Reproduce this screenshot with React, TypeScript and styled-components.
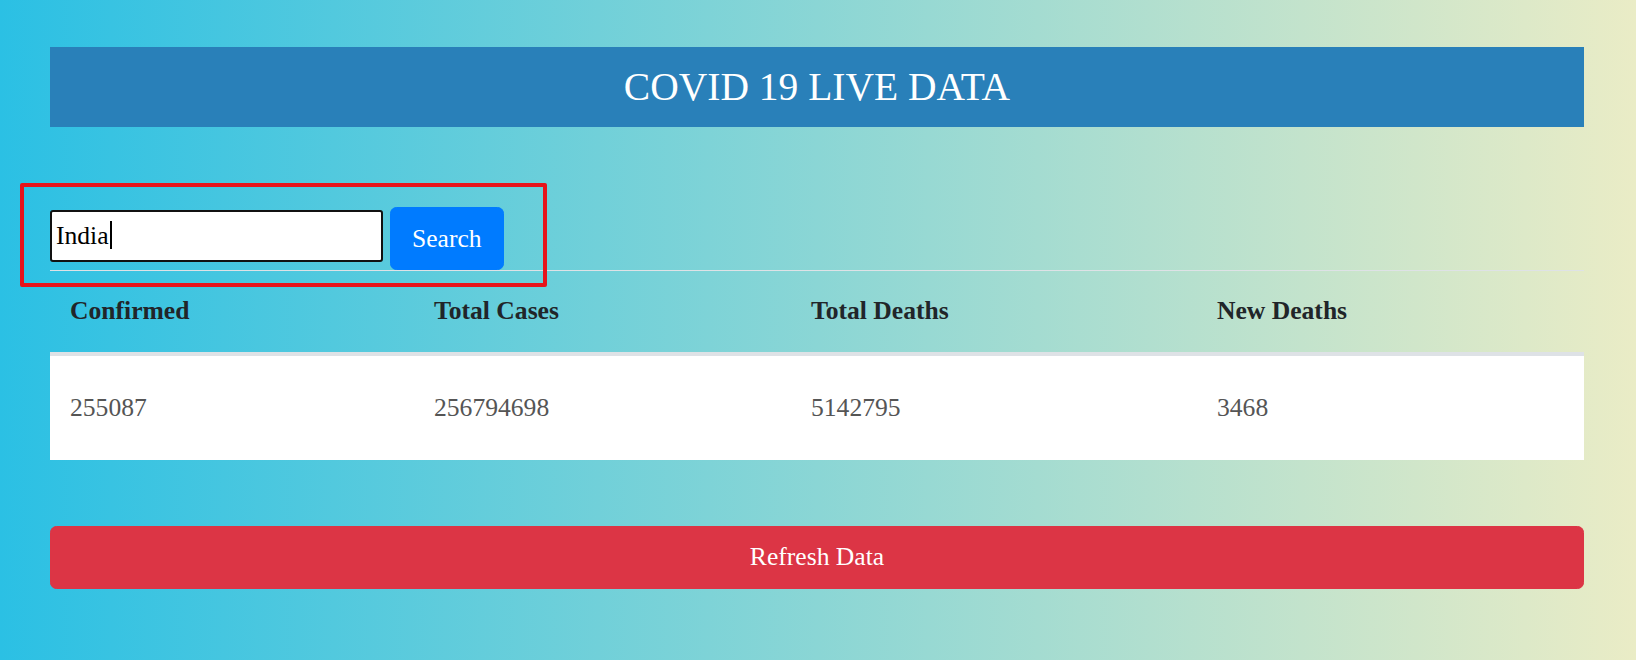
import { useState } from 'react'
import styled, { createGlobalStyle } from 'styled-components'

const GlobalStyle = createGlobalStyle`
  html, body {
    margin: 0;
    padding: 0;
  }
  body {
    font-family: 'Liberation Serif', 'Times New Roman', serif;
    background: linear-gradient(to right, #2bc0e4, #eaecc6);
    min-height: 100vh;
  }
  * {
    box-sizing: border-box;
  }
`

const Page = styled.div`
  min-height: 660px;
  padding: 47px 52px 0 50px;
`

const Banner = styled.header`
  height: 80px;
  padding-top: 2px;
  background: #2980b9;
  display: flex;
  align-items: center;
  justify-content: center;
`

const Title = styled.h1`
  margin: 0;
  color: #fff;
  font-size: 39.5px;
  font-weight: 400;
  line-height: 1.2;
`

const SearchForm = styled.form`
  position: relative;
  margin-top: 80px;
  display: flex;
  align-items: flex-start;
  gap: 7px;
`

const Highlight = styled.div`
  position: absolute;
  left: -30px;
  top: -24px;
  width: 527px;
  height: 104px;
  border: 4px solid #e8131b;
  border-radius: 2px;
  pointer-events: none;
  z-index: 2;
`

const InputWrap = styled.div`
  position: relative;
  margin-top: 3px;
`

const SearchInput = styled.input`
  width: 333px;
  height: 52px;
  border: 2px solid #111;
  border-radius: 3px;
  padding: 0 4px;
  font-family: 'Liberation Serif', 'Times New Roman', serif;
  font-size: 25.6px;
  color: #000;
  background: #fff;
  outline: none;
  caret-color: transparent;
`

const Caret = styled.span`
  position: absolute;
  left: 60px;
  top: 11px;
  width: 2px;
  height: 28px;
  background: #000;
`

const Button = styled.button<{ $variant: 'primary' | 'danger'; $block?: boolean }>`
  display: block;
  width: ${(p) => (p.$block ? '100%' : 'auto')};
  padding: ${(p) => (p.$block ? '11px 20px' : '11.5px 21px')};
  border: 1.6px solid ${(p) => (p.$variant === 'primary' ? '#007bff' : '#dc3545')};
  background: ${(p) => (p.$variant === 'primary' ? '#007bff' : '#dc3545')};
  color: #fff;
  border-radius: 6.4px;
  font-family: 'Liberation Serif', 'Times New Roman', serif;
  font-size: 25.6px;
  line-height: 38.4px;
  cursor: pointer;
`

const Table = styled.table`
  width: 100%;
  border-collapse: collapse;
  font-size: 25.6px;
  line-height: 38.4px;
`

const HeadCell = styled.th<{ $w?: number }>`
  width: ${(p) => (p.$w ? `${p.$w}px` : 'auto')};
  text-align: left;
  padding: 21px 20px;
  color: #212529;
  font-weight: 700;
  border-top: 1px solid #dee2e6;
  border-bottom: 4px solid #dee2e6;
`

const BodyRow = styled.tr`
  background: #fff;
`

const Cell = styled.td`
  padding: 33px 20px;
  color: #555;
  font-weight: 400;
`

const RefreshWrap = styled.div`
  margin-top: 66px;
`

const columns = [
  { label: 'Confirmed', w: 364 },
  { label: 'Total Cases', w: 377 },
  { label: 'Total Deaths', w: 406 },
  { label: 'New Deaths' },
]

const App = () => {
  const [country, setCountry] = useState('India')
  const data = { confirmed: 255087, totalCases: 256794698, totalDeaths: 5142795, newDeaths: 3468 }

  return (
    <>
      <GlobalStyle />
      <Page>
        <Banner>
          <Title>COVID 19 LIVE DATA</Title>
        </Banner>

        <SearchForm onSubmit={(e) => e.preventDefault()}>
          <Highlight />
          <InputWrap>
            <SearchInput value={country} onChange={(e) => setCountry(e.target.value)} />
            <Caret />
          </InputWrap>
          <Button $variant='primary' type='submit'>
            Search
          </Button>
        </SearchForm>

        <Table>
          <thead>
            <tr>
              {columns.map((c) => (
                <HeadCell key={c.label} $w={c.w}>
                  {c.label}
                </HeadCell>
              ))}
            </tr>
          </thead>
          <tbody>
            <BodyRow>
              <Cell>{data.confirmed}</Cell>
              <Cell>{data.totalCases}</Cell>
              <Cell>{data.totalDeaths}</Cell>
              <Cell>{data.newDeaths}</Cell>
            </BodyRow>
          </tbody>
        </Table>

        <RefreshWrap>
          <Button $variant='danger' $block>
            Refresh Data
          </Button>
        </RefreshWrap>
      </Page>
    </>
  )
}

export default App
